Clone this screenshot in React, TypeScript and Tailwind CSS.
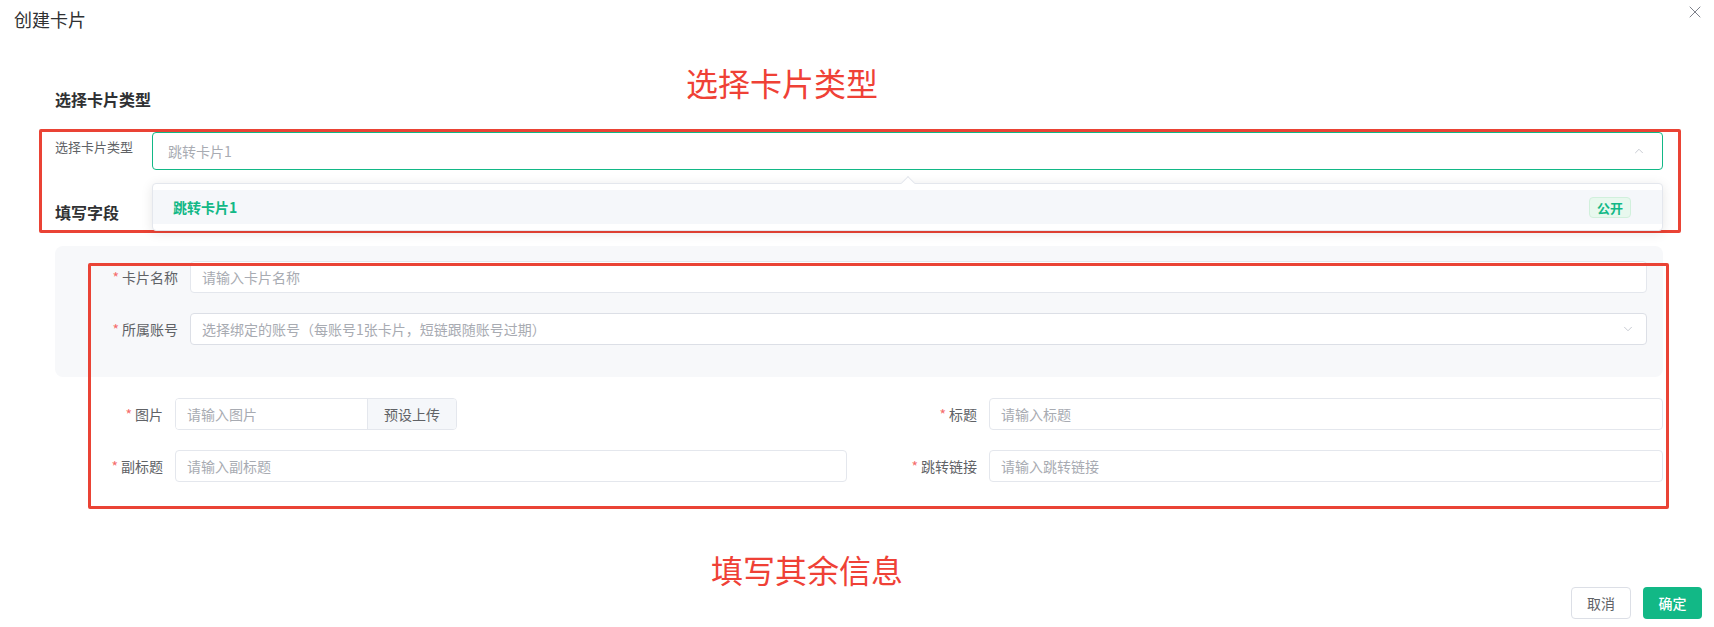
import { ChevronDown, ChevronUp, X } from "lucide-react";

const FONT = { fontFamily: '"Noto Sans CJK SC", "Noto Sans", sans-serif' };

function Req({ children, width }: { children: string; width: string }) {
  return (
    <label
      className={`${width} shrink-0 pr-3 text-right text-[14px] leading-[32px] text-[#606266]`}
    >
      <span className="mr-[3px] text-[#f56c6c]">*</span>
      {children}
    </label>
  );
}

function TextInput({ placeholder }: { placeholder: string }) {
  return (
    <div className="flex h-[32px] flex-1 items-center rounded-[4px] border border-[#e4e7ed] bg-white px-[11px] text-[14px] text-[#a8abb2]">
      {placeholder}
    </div>
  );
}

export default function App() {
  return (
    <div
      style={FONT}
      className="relative flex h-[627px] w-[1714px] flex-col overflow-hidden bg-white text-[#303133]"
    >
      {/* dialog header */}
      <div className="flex h-[36px] items-start px-[14px] pt-[7px]">
        <h1 className="text-[18px] leading-[24px] text-[#303133]">创建卡片</h1>
        <button className="-mr-[5px] -mt-[5px] ml-auto text-[#7d808a]">
          <X size={20} strokeWidth={1.2} />
        </button>
      </div>

      {/* dialog body */}
      <div className="flex flex-col pl-[55px] pr-[51px] pt-[51px]">
        <h2 className="text-[16px] font-bold leading-[24px]">选择卡片类型</h2>

        <div className="relative mt-[21px] flex items-start">
          <span className="w-[97px] shrink-0 pt-[5px] text-[13px] leading-[20px] text-[#606266]">
            选择卡片类型
          </span>
          <div className="relative flex-1">
            <div className="flex h-[38px] items-center rounded-[4px] border border-[#12b886] bg-white pl-[15px] pr-[16px] text-[14px] text-[#a8abb2]">
              <span>跳转卡片1</span>
              <ChevronUp size={14} strokeWidth={1.5} className="ml-auto text-[#c0c4cc]" />
            </div>

            {/* open dropdown */}
            <div className="absolute left-0 right-0 top-[51px] z-10 rounded-[4px] border border-[#e4e7ed] bg-white py-[6px] shadow-[0_2px_12px_rgba(0,0,0,0.1)]">
              <div className="absolute -top-[6px] left-1/2 h-[10px] w-[10px] -translate-x-1/2 rotate-45 border-l border-t border-[#e4e7ed] bg-white" />
              <div className="flex h-[34px] items-center bg-[#f5f7fa] pl-[20px] pr-[31px]">
                <span className="text-[14px] font-bold text-[#12b886]">跳转卡片1</span>
                <span className="ml-auto rounded-[4px] border border-[#d1f0dc] bg-[#e8f8ee] px-[7px] text-[13px] font-bold leading-[19px] text-[#12b886]">
                  公开
                </span>
              </div>
            </div>
          </div>
        </div>

        <h2 className="mt-[30px] text-[16px] font-bold leading-[24px]">填写字段</h2>

        {/* card basics */}
        <div className="mt-[22px] flex flex-col gap-[20px] rounded-[8px] bg-[#f7f8fa] px-[16px] pb-[32px] pt-[15px]">
          <div className="flex">
            <Req width="w-[119px]">卡片名称</Req>
            <TextInput placeholder="请输入卡片名称" />
          </div>
          <div className="flex">
            <Req width="w-[119px]">所属账号</Req>
            <div className="flex h-[32px] flex-1 items-center rounded-[4px] border border-[#dcdfe6] bg-white px-[11px] text-[14px] text-[#a8abb2]">
              <span>选择绑定的账号（每账号1张卡片，短链跟随账号过期）</span>
              <ChevronDown size={14} strokeWidth={1.5} className="ml-auto text-[#c0c4cc]" />
            </div>
          </div>
        </div>

        {/* card content */}
        <div className="mt-[21px] grid grid-cols-2 gap-x-[24px] gap-y-[20px]">
          <div className="flex">
            <Req width="w-[120px]">图片</Req>
            <div className="flex h-[32px] w-[282px] overflow-hidden rounded-[4px] border border-[#e4e7ed]">
              <div className="flex flex-1 items-center bg-white px-[11px] text-[14px] text-[#a8abb2]">
                请输入图片
              </div>
              <div className="flex w-[89px] items-center justify-center border-l border-[#e4e7ed] bg-[#f5f7fa] text-[14px] text-[#606266]">
                预设上传
              </div>
            </div>
          </div>
          <div className="flex">
            <Req width="w-[118px]">标题</Req>
            <TextInput placeholder="请输入标题" />
          </div>
          <div className="flex">
            <Req width="w-[120px]">副标题</Req>
            <TextInput placeholder="请输入副标题" />
          </div>
          <div className="flex">
            <Req width="w-[118px]">跳转链接</Req>
            <TextInput placeholder="请输入跳转链接" />
          </div>
        </div>
      </div>

      {/* dialog footer */}
      <div className="mt-auto flex justify-end gap-[12px] pb-[8px] pr-[12px]">
        <button className="h-[32px] w-[60px] rounded-[4px] border border-[#dcdfe6] bg-white text-[14px] text-[#606266]">
          取消
        </button>
        <button className="h-[32px] w-[59px] rounded-[4px] bg-[#12b886] text-[14px] font-medium text-white">
          确定
        </button>
      </div>

      {/* red callouts */}
      <div className="pointer-events-none absolute left-[39px] top-[129px] h-[104px] w-[1642px] rounded-[2px] border-[3px] border-[#ea4335]" />
      <div className="pointer-events-none absolute left-[88px] top-[263px] h-[246px] w-[1581px] rounded-[2px] border-[3px] border-[#ea4335]" />
      <span className="pointer-events-none absolute left-[686px] top-[60px] text-[32px] leading-[44px] text-[#ef4136]">
        选择卡片类型
      </span>
      <span className="pointer-events-none absolute left-[711px] top-[547px] text-[32px] leading-[44px] text-[#ef4136]">
        填写其余信息
      </span>
    </div>
  );
}
